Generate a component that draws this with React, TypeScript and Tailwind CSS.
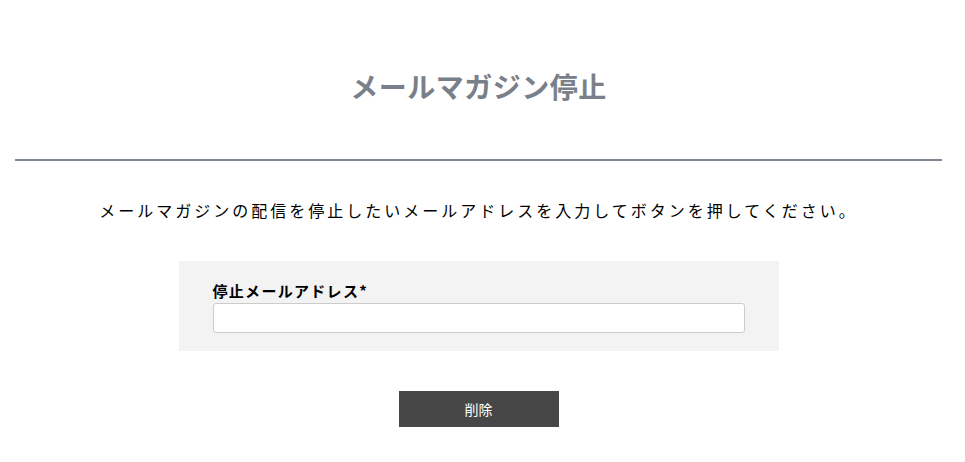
export default function App() {
  return (
    <main
      className="w-[957px] bg-white text-black"
      style={{ fontFamily: '"Noto Sans CJK JP", "Noto Sans", sans-serif' }}
    >
      <div className="px-[15px]">
        <div className="flex h-[161px] items-center justify-center border-b-2 border-[#7f8790] pt-[12px]">
          <h1 className="text-[28px] font-bold leading-none tracking-[0.5px] text-[#7a8089]">メールマガジン停止</h1>
        </div>
      </div>
      <p className="mt-[37px] text-center text-[16px] leading-[24px] tracking-[3px]">
        メールマガジンの配信を停止したいメールアドレスを入力してボタンを押してください。
      </p>
      <div className="mx-auto mt-[39px] w-[600px] bg-[#f3f3f3] px-[34px] pt-[18px] pb-[18px]">
        <label className="block text-[15px] font-bold leading-[23px] tracking-[1.3px]">停止メールアドレス*</label>
        <input type="text" className="mt-[1px] block h-[30px] w-full rounded-[3px] border border-[#cccccc] bg-white px-2" />
      </div>
      <div className="mt-[40px] flex justify-center">
        <button className="h-[36px] w-[160px] bg-[#474747] text-[14px] text-white">削除</button>
      </div>
    </main>
  )
}
